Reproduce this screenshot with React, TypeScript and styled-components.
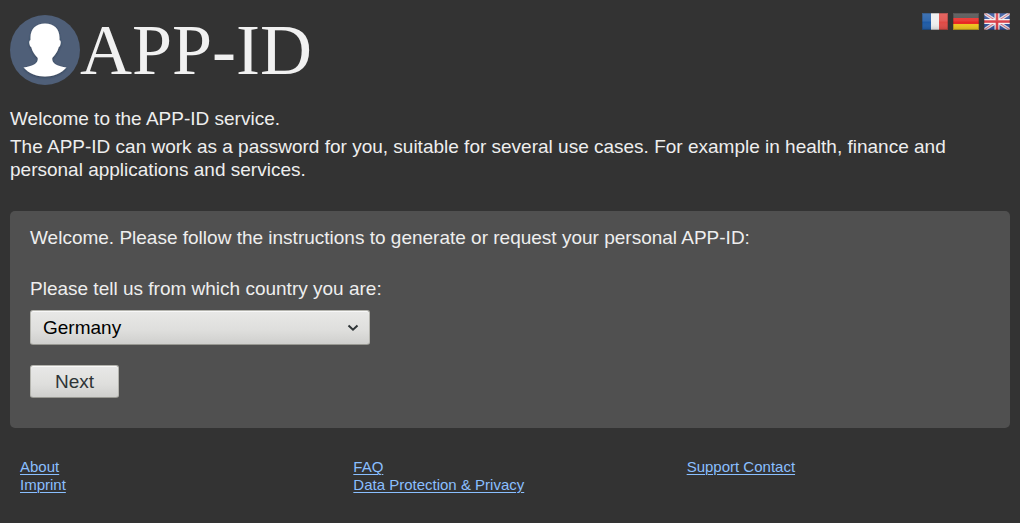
import React from "react";
import styled, { createGlobalStyle } from "styled-components";

const GlobalStyle = createGlobalStyle`
  *, *::before, *::after { box-sizing: border-box; }
  body {
    margin: 0;
    background: #333333;
    color: #eeeeee;
    font-family: "Liberation Sans", Arial, sans-serif;
    font-size: 19px;
    line-height: 23px;
  }
`;

const Page = styled.div`
  padding: 10px 10px 28px;
`;

const Header = styled.header`
  display: flex;
  justify-content: space-between;
  align-items: flex-start;
`;

const Brand = styled.h1`
  display: flex;
  align-items: center;
  margin: 5px 0 0;
  height: 70px;
  font: 400 72px/70px "Liberation Serif", "Times New Roman", serif;
  color: #f1f1f1;
`;

const Avatar = styled.svg`
  width: 70px;
  height: 70px;
  flex: none;
`;

const Languages = styled.nav`
  display: flex;
  gap: 5px;
  padding-top: 3px;
`;

const LanguageLink = styled.a`
  display: block;
  width: 26px;
  height: 17px;
  svg { display: block; }
`;

const Intro = styled.section`
  margin: 22px 0 30px;
`;

const Paragraph = styled.p`
  margin: 0 0 5px;
`;

const Panel = styled.main`
  padding: 15px 20px 30px;
  background: #505050;
  border-radius: 5px;
`;

const Form = styled.form`
  display: flex;
  flex-direction: column;
  align-items: flex-start;
  margin-top: 28px;
`;

const SelectBox = styled.div`
  display: grid;
  align-items: center;
  width: 340px;
  max-width: 100%;
  margin: 10px 0 20px;
  > * { grid-area: 1 / 1; }
`;

const controlFace = `
  border: 1px solid #b4b4ae;
  border-bottom-color: #989892;
  border-radius: 3px;
  background: linear-gradient(#e8e8e7, #dededc 60%, #cfcfcd);
  box-shadow: inset 0 1px 0 #f8f8f8;
  font: inherit;
`;

const Select = styled.select`
  ${controlFace}
  appearance: none;
  width: 100%;
  height: 35px;
  padding: 0 36px 0 12px;
  color: #000000;
`;

const Chevron = styled.svg`
  justify-self: end;
  width: 12px;
  height: 8px;
  margin-right: 11px;
  pointer-events: none;
`;

const Button = styled.button`
  ${controlFace}
  height: 33px;
  padding: 0 24px;
  color: #2e3436;
`;

const Footer = styled.footer`
  display: grid;
  grid-template-columns: repeat(3, 1fr);
  margin-top: 30px;
  font-size: 15px;
  line-height: 18px;
`;

const FooterColumn = styled.div`
  display: flex;
  flex-direction: column;
  align-items: flex-start;
  padding: 0 10px;
`;

const FooterLink = styled.a`
  color: #8abfff;
  text-decoration: underline;
  text-decoration-thickness: 1px;
  text-underline-offset: 2px;
`;

const Gloss = ({ id }: { id: string }) => (
  <>
    <defs>
      <linearGradient id={id} x1="0" y1="0" x2="0" y2="1">
        <stop offset="0" stopColor="#fff" stopOpacity="0.16" />
        <stop offset="0.45" stopColor="#fff" stopOpacity="0.1" />
        <stop offset="0.55" stopColor="#fff" stopOpacity="0" />
        <stop offset="1" stopColor="#000" stopOpacity="0.15" />
      </linearGradient>
    </defs>
    <rect width="26" height="17" fill={`url(#${id})`} />
    <rect x="0.5" y="0.5" width="25" height="16" fill="none" stroke="#222" strokeOpacity="0.25" />
  </>
);

const FrenchFlag = () => (
  <svg width="26" height="17" viewBox="0 0 26 17" aria-hidden="true">
    <rect width="26" height="17" fill="#eeeeee" />
    <rect width="9" height="17" fill="#1d5aa6" />
    <rect x="17" width="9" height="17" fill="#df4a45" />
    <Gloss id="gloss-fr" />
  </svg>
);

const GermanFlag = () => (
  <svg width="26" height="17" viewBox="0 0 26 17" aria-hidden="true">
    <rect width="26" height="6" fill="#4a4a4a" />
    <rect y="5" width="26" height="6" fill="#e82622" />
    <rect y="11" width="26" height="6" fill="#efc51b" />
    <Gloss id="gloss-de" />
  </svg>
);

const BritishFlag = () => (
  <svg width="26" height="17" viewBox="0 0 26 17" aria-hidden="true">
    <rect width="26" height="17" fill="#2f4f9a" />
    <path d="M0 0 26 17M26 0 0 17" stroke="#dcdbe6" strokeWidth="3.4" />
    <path d="M0 0 26 17M26 0 0 17" stroke="#d66772" strokeWidth="1" />
    <path d="M13 0v17M0 8.5h26" stroke="#f3eff1" strokeWidth="5" />
    <path d="M13 0v17M0 8.5h26" stroke="#d83a43" strokeWidth="2.6" />
    <Gloss id="gloss-en" />
  </svg>
);

const languages = [
  { label: "Français", Flag: FrenchFlag },
  { label: "Deutsch", Flag: GermanFlag },
  { label: "English", Flag: BritishFlag },
];

const footerColumns = [
  ["About", "Imprint"],
  ["FAQ", "Data Protection & Privacy"],
  ["Support Contact"],
];

export default function App() {
  return (
    <>
      <GlobalStyle />
      <Page>
        <Header>
          <Brand>
            <Avatar viewBox="0 0 70 70" aria-hidden="true">
              <defs>
                <filter id="bust-shadow" x="-10%" y="-10%" width="120%" height="120%">
                  <feDropShadow dx="0" dy="1" stdDeviation="0.8" floodColor="#1d2b40" floodOpacity="0.6" />
                </filter>
              </defs>
              <circle cx="35" cy="35" r="35" fill="#4f5f78" />
              <path
                filter="url(#bust-shadow)"
                fill="#fff"
                d="M35 8.500C26 8.500 20.500 14 20.500 22.500V25C19 25.500 19 27.500 19.600 29.500C20 31.200 20.500 31.500 21.200 32C22.500 37 25 40 27.800 43C28.500 48.500 22 51.500 13.500 52.500C19 58.500 26.500 61.500 35 61.500S51 58.500 56.500 52.500C48 51.500 41.500 48.500 42.200 43C45 40 47.500 37 48.800 32C49.500 31.500 50 31.200 50.400 29.500C51 27.500 51 25.500 49.500 25V22.500C49.500 14 44 8.500 35 8.500Z"
              />
            </Avatar>
            APP-ID
          </Brand>
          <Languages aria-label="Language">
            {languages.map(({ label, Flag }) => (
              <LanguageLink key={label} href="#" aria-label={label}>
                <Flag />
              </LanguageLink>
            ))}
          </Languages>
        </Header>
        <Intro>
          <Paragraph>Welcome to the APP-ID service.</Paragraph>
          <Paragraph>
            The APP-ID can work as a password for you, suitable for several use cases. For example in
            health, finance and personal applications and services.
          </Paragraph>
        </Intro>
        <Panel>
          <Paragraph>
            Welcome. Please follow the instructions to generate or request your personal APP-ID:
          </Paragraph>
          <Form onSubmit={(event) => event.preventDefault()}>
            <label htmlFor="country">Please tell us from which country you are:</label>
            <SelectBox>
              <Select id="country" defaultValue="Germany">
                <option>Germany</option>
              </Select>
              <Chevron viewBox="0 0 12 8" aria-hidden="true">
                <path d="M1.500 1.500 6 5.700 10.500 1.500" fill="none" stroke="#2e3436" strokeWidth="2" />
              </Chevron>
            </SelectBox>
            <Button type="submit">Next</Button>
          </Form>
        </Panel>
        <Footer>
          {footerColumns.map((links) => (
            <FooterColumn key={links[0]}>
              {links.map((text) => (
                <FooterLink key={text} href="#">
                  {text}
                </FooterLink>
              ))}
            </FooterColumn>
          ))}
        </Footer>
      </Page>
    </>
  );
}
